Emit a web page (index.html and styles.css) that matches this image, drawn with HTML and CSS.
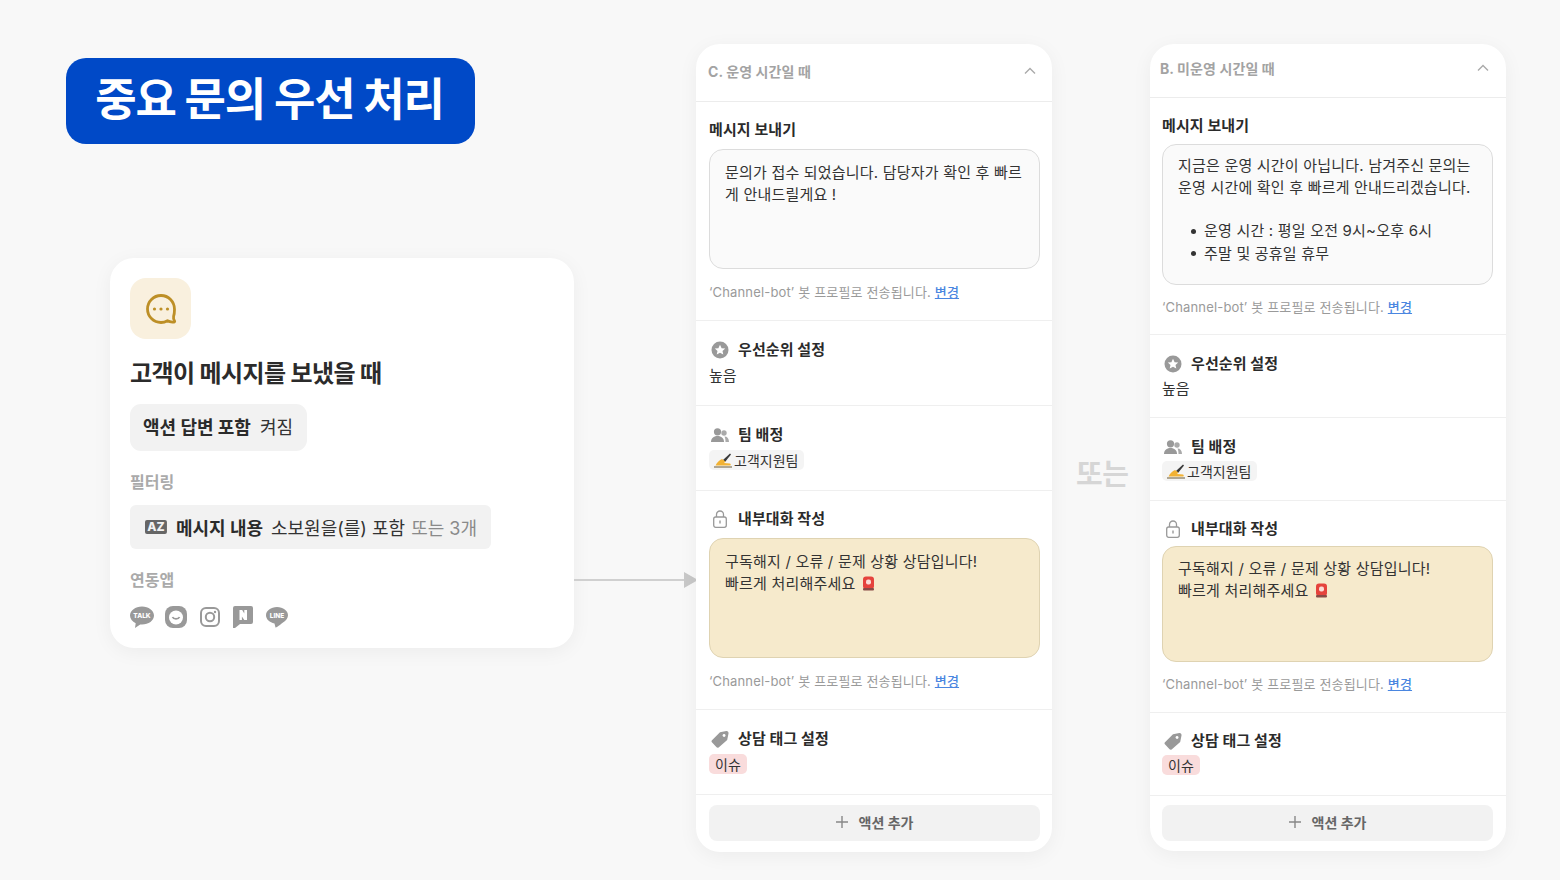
FILE: index.html
```html
<!DOCTYPE html>
<html lang="ko">
<head>
<meta charset="utf-8">
<title>중요 문의 우선 처리</title>
<link rel="stylesheet" href="styles.css">
</head>
<body>
<main class="canvas">
  <h1 class="title">중요 문의 우선 처리</h1>

  <section class="trigger">
    <div class="trigger-icon">
      <svg width="34" height="34" viewBox="0 0 34 34" fill="none"><path d="M17 3.500C9.500 3.500 3.500 9.500 3.500 17S9.500 30.500 17 30.500c2.500 0 4.500-.6 6.500-1.700 1.700 1 4 1.500 6.500 1.200.7-.1.9-.7.5-1.200-1-1.200-1.200-2.800-.9-4.500.6-1.700.9-4 .9-6.800C30.500 9.500 24.500 3.500 17 3.500Z" stroke="#bd8f26" stroke-width="2.800"/><circle cx="10.500" cy="17" r="1.600" fill="#bd8f26"/><circle cx="17" cy="17" r="1.600" fill="#bd8f26"/><circle cx="23.500" cy="17" r="1.600" fill="#bd8f26"/></svg>
    </div>
    <h2 class="trigger-title">고객이 메시지를 보냈을 때</h2>
    <div class="chip chip-option"><b>액션 답변 포함</b><span>켜짐</span></div>
    <div class="trigger-label label-filter">필터링</div>
    <div class="chip chip-filter">
      <svg class="az" width="22" height="14" viewBox="0 0 22 14"><rect width="22" height="14" rx="2" fill="#666"/><text x="11" y="11.300" text-anchor="middle" class="az-text">AZ</text></svg>
      <b>메시지 내용</b><span>소보원을(를) 포함</span><span class="muted">또는 3개</span>
    </div>
    <div class="trigger-label label-apps">연동앱</div>
    <div class="apps">
      <svg class="app-talk" width="24" height="24" viewBox="0 0 24 24"><path d="M12 1.500C5.400 1.500 0 5.500 0 10.500c0 3.300 2.300 6.100 5.700 7.700L5 23l5.200-3.600c.6 0 1.200.1 1.800.1 6.600 0 12-4 12-9s-5.400-9-12-9Z" fill="#999"/><text x="12" y="13" text-anchor="middle" class="app-text">TALK</text></svg>
      <svg width="22" height="22" viewBox="0 0 22 22"><rect x="0" y="0" width="22" height="22" rx="8" fill="#999"/><circle cx="11" cy="11.500" r="7" fill="#fff"/><path d="M7.500 11c1 2.600 6 2.600 7 0" stroke="#999" stroke-width="1.700" fill="none"/></svg>
      <svg width="20" height="20" viewBox="0 0 20 20" fill="none"><rect x="1" y="1" width="18" height="18" rx="5" stroke="#999" stroke-width="2"/><circle cx="10" cy="10" r="4.200" stroke="#999" stroke-width="2"/><circle cx="15" cy="5" r="1.200" fill="#999"/></svg>
      <svg width="20" height="22" viewBox="0 0 20 22"><path d="M2 0h16a2 2 0 0 1 2 2v14a2 2 0 0 1-2 2H7l-5 4H0V2a2 2 0 0 1 2-2Z" fill="#999"/><path d="M6.500 4h2.700l2.100 3.500V4h2.700v10h-2.700L8.900 10.500V14H6.500Z" fill="#fff"/></svg>
      <svg width="22" height="21" viewBox="0 0 22 21"><path d="M11 0C4.900 0 0 3.700 0 8.300c0 4 3.700 7.400 8.500 8.100l1 4.100c.3.400 2-.7 7.500-5 3-1.800 5-4.300 5-7.200C22 3.700 17.100 0 11 0Z" fill="#999"/><text x="11" y="10.500" text-anchor="middle" class="app-text">LINE</text></svg>
    </div>
    <svg class="connector" width="124" height="18" viewBox="0 0 124 18"><path d="M0 9h110" stroke="#d0d0d0" stroke-width="2"/><path d="M110 1l14 8-14 8Z" fill="#c8c8c8"/></svg>
  </section>

  <section class="panel panel-c">
    <header class="panel-head"><span>C. 운영 시간일 때</span><svg width="12" height="8" viewBox="0 0 12 8" fill="none"><path d="M1 6.500 6 1.500l5 5" stroke="#aaa" stroke-width="1.400"/></svg></header>
    <div class="sec sec-msg">
      <h3 class="sec-title plain">메시지 보내기</h3>
      <div class="box box-h1">문의가 접수 되었습니다. 담당자가 확인 후 빠르게 안내드릴게요 !</div>
      <p class="note">‘Channel-bot’ 봇 프로필로 전송됩니다. <a href="#">변경</a></p>
    </div>
    <div class="sec sec-row">
      <h3 class="sec-title"><svg width="18" height="18" viewBox="0 0 18 18"><circle cx="9" cy="9" r="8.500" fill="#999"/><path d="m9 3.800 1.600 3.400 3.600.4-2.700 2.400.8 3.600L9 11.800l-3.300 1.800.8-3.600-2.700-2.400 3.600-.4Z" fill="#fff"/></svg>우선순위 설정</h3>
      <div class="value">높음</div>
    </div>
    <div class="sec sec-row">
      <h3 class="sec-title"><svg width="18" height="14" viewBox="0 0 18 14"><circle cx="6.500" cy="3.800" r="3.600" fill="#999"/><path d="M0 14c0-3.500 2.500-6 6.500-6s6.500 2.500 6.500 6Z" fill="#999"/><circle cx="13" cy="5" r="2.700" fill="#aaa"/><path d="M13.500 8.500c2.800 0 4.500 2 4.500 5.500h-3.500c0-2-.2-4-1-5.500Z" fill="#aaa"/></svg>팀 배정</h3>
      <div class="tag tag-team"><svg width="19" height="16" viewBox="0 0 19 16"><path d="M9 8 16 1.500l1 1L11 10Z" fill="#3a3a3a"/><path d="M1.500 13.500C3 10.500 5.500 8 8 7l3.500 2.500-1.500 1.500 6 .5c1 .2 1 2 0 2Z" fill="#f2b233"/><path d="M0 14.500h18v1H0Z" fill="#6b5a35"/></svg>고객지원팀</div>
    </div>
    <div class="sec sec-note">
      <h3 class="sec-title"><svg width="14" height="18" viewBox="0 0 14 18" fill="none"><rect x=".7" y="7" width="12.600" height="10.300" rx="2" stroke="#999" stroke-width="1.300"/><path d="M3.500 7V4.500a3.500 3.500 0 0 1 7 0V7" stroke="#999" stroke-width="1.300"/><rect x="6.300" y="10.500" width="1.400" height="3" fill="#999"/></svg>내부대화 작성</h3>
      <div class="box box-yellow box-h1">구독해지 / 오류 / 문제 상황 상담입니다!<br>빠르게 처리해주세요 <svg class="siren" width="13" height="15" viewBox="0 0 13 15"><rect x="1" y=".5" width="11" height="12.500" rx="3" fill="#e5433c"/><rect x="4" y="3.500" width="5" height="5" rx="2" fill="#fbdcd6"/><rect x="1" y="12" width="11" height="2.500" rx="1" fill="#8a4a45"/></svg></div>
      <p class="note">‘Channel-bot’ 봇 프로필로 전송됩니다. <a href="#">변경</a></p>
    </div>
    <div class="sec sec-row">
      <h3 class="sec-title"><svg width="20" height="19" viewBox="0 0 20 19"><path d="M10 1.500 17 0c1.500-.2 2.700 1 2.500 2.500L18 10l-9.500 8.300c-.7.600-1.700.6-2.300-.1L1 12.500c-.6-.7-.6-1.700.1-2.300Z" fill="#999"/><circle cx="14.500" cy="5" r="1.600" fill="#fff"/></svg>상담 태그 설정</h3>
      <div class="tag tag-issue">이슈</div>
    </div>
    <div class="add-wrap"><button class="add"><svg width="12" height="12" viewBox="0 0 12 12"><path d="M6 0v12M0 6h12" stroke="#888" stroke-width="1.400"/></svg>액션 추가</button></div>
  </section>

  <div class="or">또는</div>

  <section class="panel panel-b">
    <header class="panel-head"><span>B. 미운영 시간일 때</span><svg width="12" height="8" viewBox="0 0 12 8" fill="none"><path d="M1 6.500 6 1.500l5 5" stroke="#aaa" stroke-width="1.400"/></svg></header>
    <div class="sec sec-msg">
      <h3 class="sec-title plain">메시지 보내기</h3>
      <div class="box box-long">지금은 운영 시간이 아닙니다. 남겨주신 문의는<br>운영 시간에 확인 후 빠르게 안내드리겠습니다.<ul class="list"><li>운영 시간 : 평일 오전 9시~오후 6시</li><li>주말 및 공휴일 휴무</li></ul></div>
      <p class="note">‘Channel-bot’ 봇 프로필로 전송됩니다. <a href="#">변경</a></p>
    </div>
    <div class="sec sec-row">
      <h3 class="sec-title"><svg width="18" height="18" viewBox="0 0 18 18"><circle cx="9" cy="9" r="8.500" fill="#999"/><path d="m9 3.800 1.600 3.400 3.600.4-2.700 2.400.8 3.600L9 11.800l-3.300 1.800.8-3.600-2.700-2.400 3.600-.4Z" fill="#fff"/></svg>우선순위 설정</h3>
      <div class="value">높음</div>
    </div>
    <div class="sec sec-row">
      <h3 class="sec-title"><svg width="18" height="14" viewBox="0 0 18 14"><circle cx="6.500" cy="3.800" r="3.600" fill="#999"/><path d="M0 14c0-3.500 2.500-6 6.500-6s6.500 2.500 6.500 6Z" fill="#999"/><circle cx="13" cy="5" r="2.700" fill="#aaa"/><path d="M13.500 8.500c2.800 0 4.500 2 4.500 5.500h-3.500c0-2-.2-4-1-5.500Z" fill="#aaa"/></svg>팀 배정</h3>
      <div class="tag tag-team"><svg width="19" height="16" viewBox="0 0 19 16"><path d="M9 8 16 1.500l1 1L11 10Z" fill="#3a3a3a"/><path d="M1.500 13.500C3 10.500 5.500 8 8 7l3.500 2.500-1.500 1.500 6 .5c1 .2 1 2 0 2Z" fill="#f2b233"/><path d="M0 14.500h18v1H0Z" fill="#6b5a35"/></svg>고객지원팀</div>
    </div>
    <div class="sec sec-note">
      <h3 class="sec-title"><svg width="14" height="18" viewBox="0 0 14 18" fill="none"><rect x=".7" y="7" width="12.600" height="10.300" rx="2" stroke="#999" stroke-width="1.300"/><path d="M3.500 7V4.500a3.500 3.500 0 0 1 7 0V7" stroke="#999" stroke-width="1.300"/><rect x="6.300" y="10.500" width="1.400" height="3" fill="#999"/></svg>내부대화 작성</h3>
      <div class="box box-yellow box-h2">구독해지 / 오류 / 문제 상황 상담입니다!<br>빠르게 처리해주세요 <svg class="siren" width="13" height="15" viewBox="0 0 13 15"><rect x="1" y=".5" width="11" height="12.500" rx="3" fill="#e5433c"/><rect x="4" y="3.500" width="5" height="5" rx="2" fill="#fbdcd6"/><rect x="1" y="12" width="11" height="2.500" rx="1" fill="#8a4a45"/></svg></div>
      <p class="note">‘Channel-bot’ 봇 프로필로 전송됩니다. <a href="#">변경</a></p>
    </div>
    <div class="sec sec-row sec-tag">
      <h3 class="sec-title"><svg width="20" height="19" viewBox="0 0 20 19"><path d="M10 1.500 17 0c1.500-.2 2.700 1 2.500 2.500L18 10l-9.500 8.300c-.7.600-1.700.6-2.300-.1L1 12.500c-.6-.7-.6-1.700.1-2.300Z" fill="#999"/><circle cx="14.500" cy="5" r="1.600" fill="#fff"/></svg>상담 태그 설정</h3>
      <div class="tag tag-issue">이슈</div>
    </div>
    <div class="add-wrap"><button class="add"><svg width="12" height="12" viewBox="0 0 12 12"><path d="M6 0v12M0 6h12" stroke="#888" stroke-width="1.400"/></svg>액션 추가</button></div>
  </section>
</main>
</body>
</html>
```
FILE: styles.css
```css
* { box-sizing: border-box; }
html, body { margin: 0; padding: 0; }
body {
  width: 1560px;
  height: 880px;
  overflow: hidden;
  background: #f8f8f8;
  color: #2b2b2b;
  font-family: Inter, "Noto Sans CJK KR", sans-serif;
}
.canvas { position: relative; width: 1560px; height: 880px; }
h1, h2, h3, p, ul { margin: 0; padding: 0; }

.title {
  position: absolute; left: 66px; top: 58px;
  width: 409px; height: 86px;
  padding: 0 2px 4px 0;
  display: flex; align-items: center; justify-content: center;
  background: #0049c7; color: #fff;
  border-radius: 20px;
  font-size: 45px; font-weight: 700; letter-spacing: -1.200px; word-spacing: -.5px; line-height: 1;
}

.trigger {
  position: absolute; left: 110px; top: 258px;
  width: 464px; height: 390px;
  padding: 20px;
  background: #fff; border-radius: 24px;
  box-shadow: 0 4px 20px rgba(0,0,0,.05);
}
.trigger-icon {
  width: 61px; height: 61px; border-radius: 16px; background: #f9f0de;
  display: flex; align-items: center; justify-content: center;
}
.trigger-title { margin-top: 16px; font-size: 24px; line-height: 38px; font-weight: 700; letter-spacing: -.6px; color: #2b2b2b; }
.chip { display: inline-flex; align-items: center; background: #f2f2f2; white-space: nowrap; color: #333; }
.chip b { font-weight: 700; color: #2b2b2b; }
.chip-option { margin-top: 11px; height: 47px; padding: 0 14px 4px 13px; border-radius: 11px; font-size: 18px; gap: 9px; }
.chip-filter { display: flex; width: 361px; margin-top: 11px; height: 44px; padding: 0 14px 0 15px; border-radius: 6px; font-size: 18px; gap: 8px; }
.chip-filter .muted { color: #8a8a8a; margin-left: -2px; }
.chip-filter b { margin-left: 1px; }
.az-text { font: 800 12px Inter, sans-serif; fill: #f2f2f2; }
.trigger-label { font-size: 16px; line-height: 24px; font-weight: 700; color: #aaa; }
.label-filter { margin-top: 19px; }
.label-apps { margin-top: 19px; }
.apps { display: flex; align-items: center; gap: 13px; margin-top: 13px; }
.app-talk { margin-right: -2px; }
.app-text { font: 800 6.500px Inter, sans-serif; fill: #fff; }
.connector { position: absolute; left: 464px; top: 313px; }

.panel {
  position: absolute; width: 356px;
  background: #fff; border-radius: 24px; overflow: hidden;
  box-shadow: 0 4px 20px rgba(0,0,0,.05);
}
.panel-c { left: 696px; top: 44px; height: 808px; }
.panel-b { left: 1150px; top: 44px; height: 807px; }
.panel-head {
  display: flex; align-items: center; justify-content: space-between;
  padding: 0 16px 4px 12px; border-bottom: 1px solid #ececec;
  font-size: 14px; font-weight: 700; color: #a3a3a3; letter-spacing: .1px;
}
.panel-c .panel-head { height: 58px; }
.panel-b .panel-head { height: 54px; padding: 0 17px 6px 10px; }
.sec { padding: 0 12px 0 13px; border-bottom: 1px solid #efefef; }
.panel-b .sec { padding: 0 13px 0 12px; }
.sec-title {
  display: flex; align-items: center; gap: 9px;
  font-size: 15px; font-weight: 700; line-height: 22px; color: #2b2b2b; letter-spacing: .12px;
}
.sec-title svg { flex: none; }
.sec-title > svg { margin-left: 2px; width: 18px; }
.sec-row { height: 85px; }
.panel .sec-row { padding-top: 18px; }
.panel-b .sec-row { height: 83px; }
.panel-b .sec-tag { padding-top: 17px; }
.value { font-size: 15px; line-height: 22px; margin-top: 4px; color: #333; }
.tag { display: inline-flex; align-items: center; height: 20px; border-radius: 5px; font-size: 14px; padding: 0 5px; color: #333; margin-top: 4px; }
.panel-b .value, .panel-b .tag { margin-top: 3px; }
.tag-team { background: #f4f4f4; padding: 0 6px 0 5px; }
.tag-team svg { margin-right: 1px; }
.tag-issue { background: #f9dcdc; padding: 0 6px; }

.panel .sec-msg { padding-top: 17px; }
.panel-c .sec-msg { height: 219px; }
.panel-b .sec-msg { height: 237px; }
.panel .sec-note { padding-top: 17px; }
.panel-c .sec-note { height: 219px; }
.panel-b .sec-note { height: 212px; }
.box {
  margin-top: 8px; padding: 12px 15px;
  background: #fafafa; border: 1px solid #dcdcdc; border-radius: 14px;
  font-size: 15px; line-height: 22px; color: #333; letter-spacing: .2px;
}
.box-h1 { height: 120px; }
.box-h2 { height: 116px; margin-top: 6px; padding-top: 11px; }
.box-long { height: 141px; margin-top: 7px; padding-top: 10px; }
.box-yellow { background: #f6eacc; border-color: #dfd3b2; }
.panel-b .box-yellow { margin-top: 6px; }
.siren { vertical-align: -2px; margin-left: 2px; }
.list { margin-top: 21px; padding-left: 26px; line-height: 22.500px; list-style: none; }
.list li { display: flex; align-items: center; gap: 8px; margin-left: -13px; }
.list li::before { content: ""; flex: none; width: 5px; height: 5px; border-radius: 50%; background: #333; }
.note { margin-top: 13px; font-size: 13px; line-height: 20px; color: #9a9a9a; letter-spacing: .16px; }
.panel-b .note { margin-top: 12px; }
.note a { color: #4a86e0; font-weight: 500; }
.add-wrap { padding: 10px 12px 0 13px; }
.panel-b .add-wrap { padding: 9px 13px 0 12px; }
.add {
  width: 100%; height: 36px; padding: 0 0 2px; border: 0; border-radius: 8px; background: #f2f2f2;
  display: flex; align-items: center; justify-content: center; gap: 11px;
  font: 700 14px Inter, "Noto Sans CJK KR", sans-serif; color: #666;
}
.or { position: absolute; left: 1076px; top: 457px; font-size: 29px; font-weight: 700; color: #d6d6d6; line-height: 36px; letter-spacing: -.5px; }
```
